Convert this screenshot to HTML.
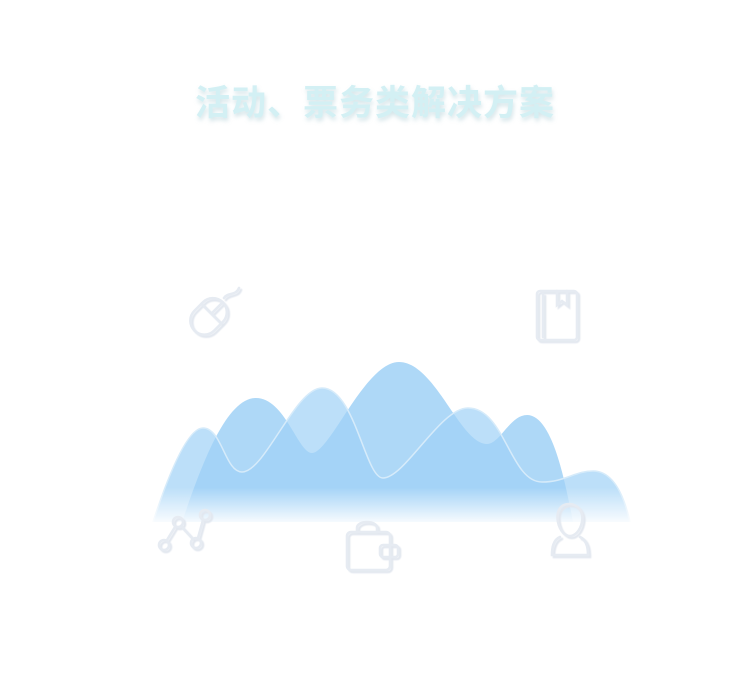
<!DOCTYPE html>
<html><head><meta charset="utf-8"><style>
html,body{margin:0;padding:0;background:#fff;width:750px;height:690px;overflow:hidden}
.t{position:absolute;left:0;top:75px;width:750px;text-align:center;font:bold 35px "Liberation Sans","Noto Sans CJK SC",sans-serif;color:#d3f0f4;text-shadow:1px 3px 4px rgba(150,190,200,.4);letter-spacing:1px}
svg{position:absolute;left:0;top:0}
</style></head><body>
<div class="t">活动、票务类解决方案</div>
<svg width="750" height="690" viewBox="0 0 750 690">
<defs>
<linearGradient id="f" x1="0" y1="0" x2="0" y2="1">
<stop offset="0" stop-color="#fff" stop-opacity="0"/>
<stop offset="0.55" stop-color="#fff" stop-opacity="0"/>
<stop offset="1" stop-color="#fff" stop-opacity="1"/>
</linearGradient>
<filter id="s"><feDropShadow dx="2" dy="2" stdDeviation="0.6" flood-color="#e2e7ef"/></filter>
</defs>
<path d="M182,522 C200,470 225,398 256,398 C285,398 298,453 312,453 C330,453 365,362 399,362 C435,362 460,444 487,444 C500,444 510,415 527,415 C552,415 565,480 573,522 Z" fill="#9ccff5" fill-opacity="0.82"/>
<path d="M153,522 C170,470 188,428 203,428 C222,428 225,472 242,472 C265,472 295,388 322,388 C355,388 365,478 383,478 C405,478 440,408 468,408 C505,408 510,482 542,482 C565,482 575,471 593,471 C615,471 625,500 630,522 Z" fill="#9fd1f6" fill-opacity="0.7"/>
<path d="M153,522 C170,470 188,428 203,428 C222,428 225,472 242,472 C265,472 295,388 322,388 C355,388 365,478 383,478 C405,478 440,408 468,408 C505,408 510,482 542,482 C565,482 575,471 593,471 C615,471 625,500 630,522" fill="none" stroke="#d6ebfa" stroke-width="1.5"/>
<rect x="140" y="440" width="500" height="86" fill="url(#f)"/>
<rect x="140" y="522" width="500" height="10" fill="#fff"/>
<g fill="none" stroke="#e6ebf2" stroke-width="2.6" stroke-linecap="round" filter="url(#s)">
<g transform="rotate(45 210 315)"><rect x="196" y="297" width="28" height="40" rx="14"/><line x1="210" y1="297" x2="210" y2="313"/><line x1="196" y1="313" x2="224" y2="313"/></g>
<path d="M224,298 C228,292 236,296 239,288"/>
<rect x="537" y="291" width="40" height="49" rx="3"/><line x1="543" y1="294" x2="543" y2="337"/><path d="M557,291 V305 L562,301 L567,305 V291"/>
<circle cx="164" cy="545" r="5"/><circle cx="178" cy="522" r="5"/><circle cx="196" cy="543" r="5"/><circle cx="205" cy="515" r="5"/>
<line x1="167" y1="540" x2="175" y2="527"/><line x1="181" y1="526" x2="193" y2="539"/><line x1="198" y1="538" x2="203" y2="520"/>
<rect x="347" y="532" width="43" height="38" rx="4"/><path d="M357,531 V528 C357,520 377,520 377,528 V531"/><rect x="380" y="545" width="18" height="12" rx="3"/>
<path d="M569,504 C560,504 556,512 558,522 C560,532 566,536 570,536 C574,536 580,532 582,522 C584,512 578,504 569,504 Z"/>
<path d="M560,537 C553,540 552,548 552,555 H588 C588,548 587,540 580,537"/>
</g>
</svg>
</body></html>
